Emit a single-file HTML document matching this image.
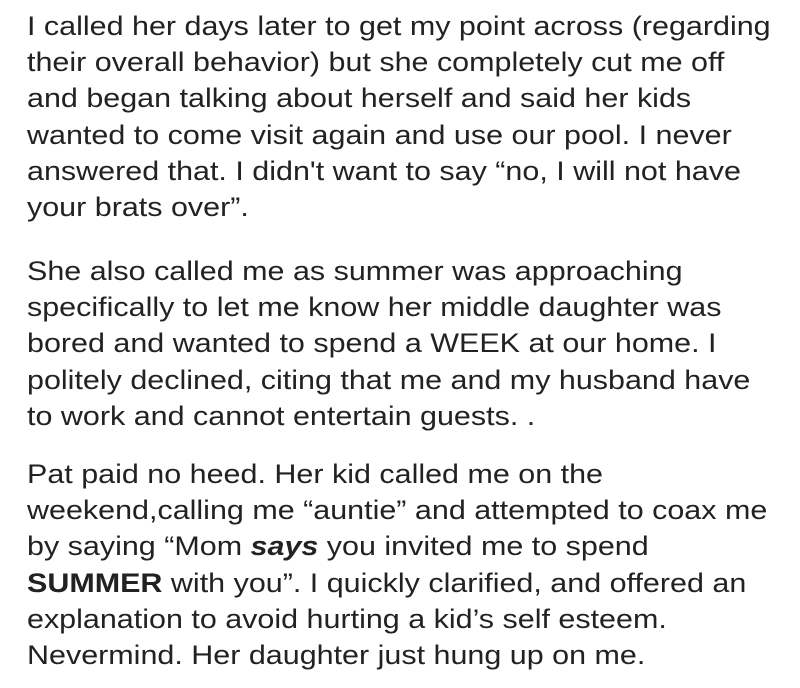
<!DOCTYPE html>
<html><head><meta charset="utf-8"><style>
html,body{margin:0;padding:0;background:#fff;width:800px;height:688px;overflow:hidden}
.p{position:absolute;left:27px;font-family:"Liberation Sans",Arial,sans-serif;font-size:26.5px;line-height:36.2px;color:#222;white-space:nowrap;transform:scaleX(1.15);transform-origin:0 0}
</style></head><body>
<div class="p" style="top:8px">I called her days later to get my point across (regarding<br>their overall behavior) but she completely cut me off<br>and began talking about herself and said her kids<br>wanted to come visit again and use our pool. I never<br>answered that. I didn't want to say “no, I will not have<br>your brats over”.</div>
<div class="p" style="top:253px">She also called me as summer was approaching<br>specifically to let me know her middle daughter was<br>bored and wanted to spend a WEEK at our home. I<br>politely declined, citing that me and my husband have<br>to work and cannot entertain guests. .</div>
<div class="p" style="top:456px">Pat paid no heed. Her kid called me on the<br>weekend,calling me “auntie” and attempted to coax me<br>by saying “Mom <b><i>says</i></b> you invited me to spend<br><b>SUMMER</b> with you”. I quickly clarified, and offered an<br>explanation to avoid hurting a kid’s self esteem.<br>Nevermind. Her daughter just hung up on me.</div>
</body></html>
